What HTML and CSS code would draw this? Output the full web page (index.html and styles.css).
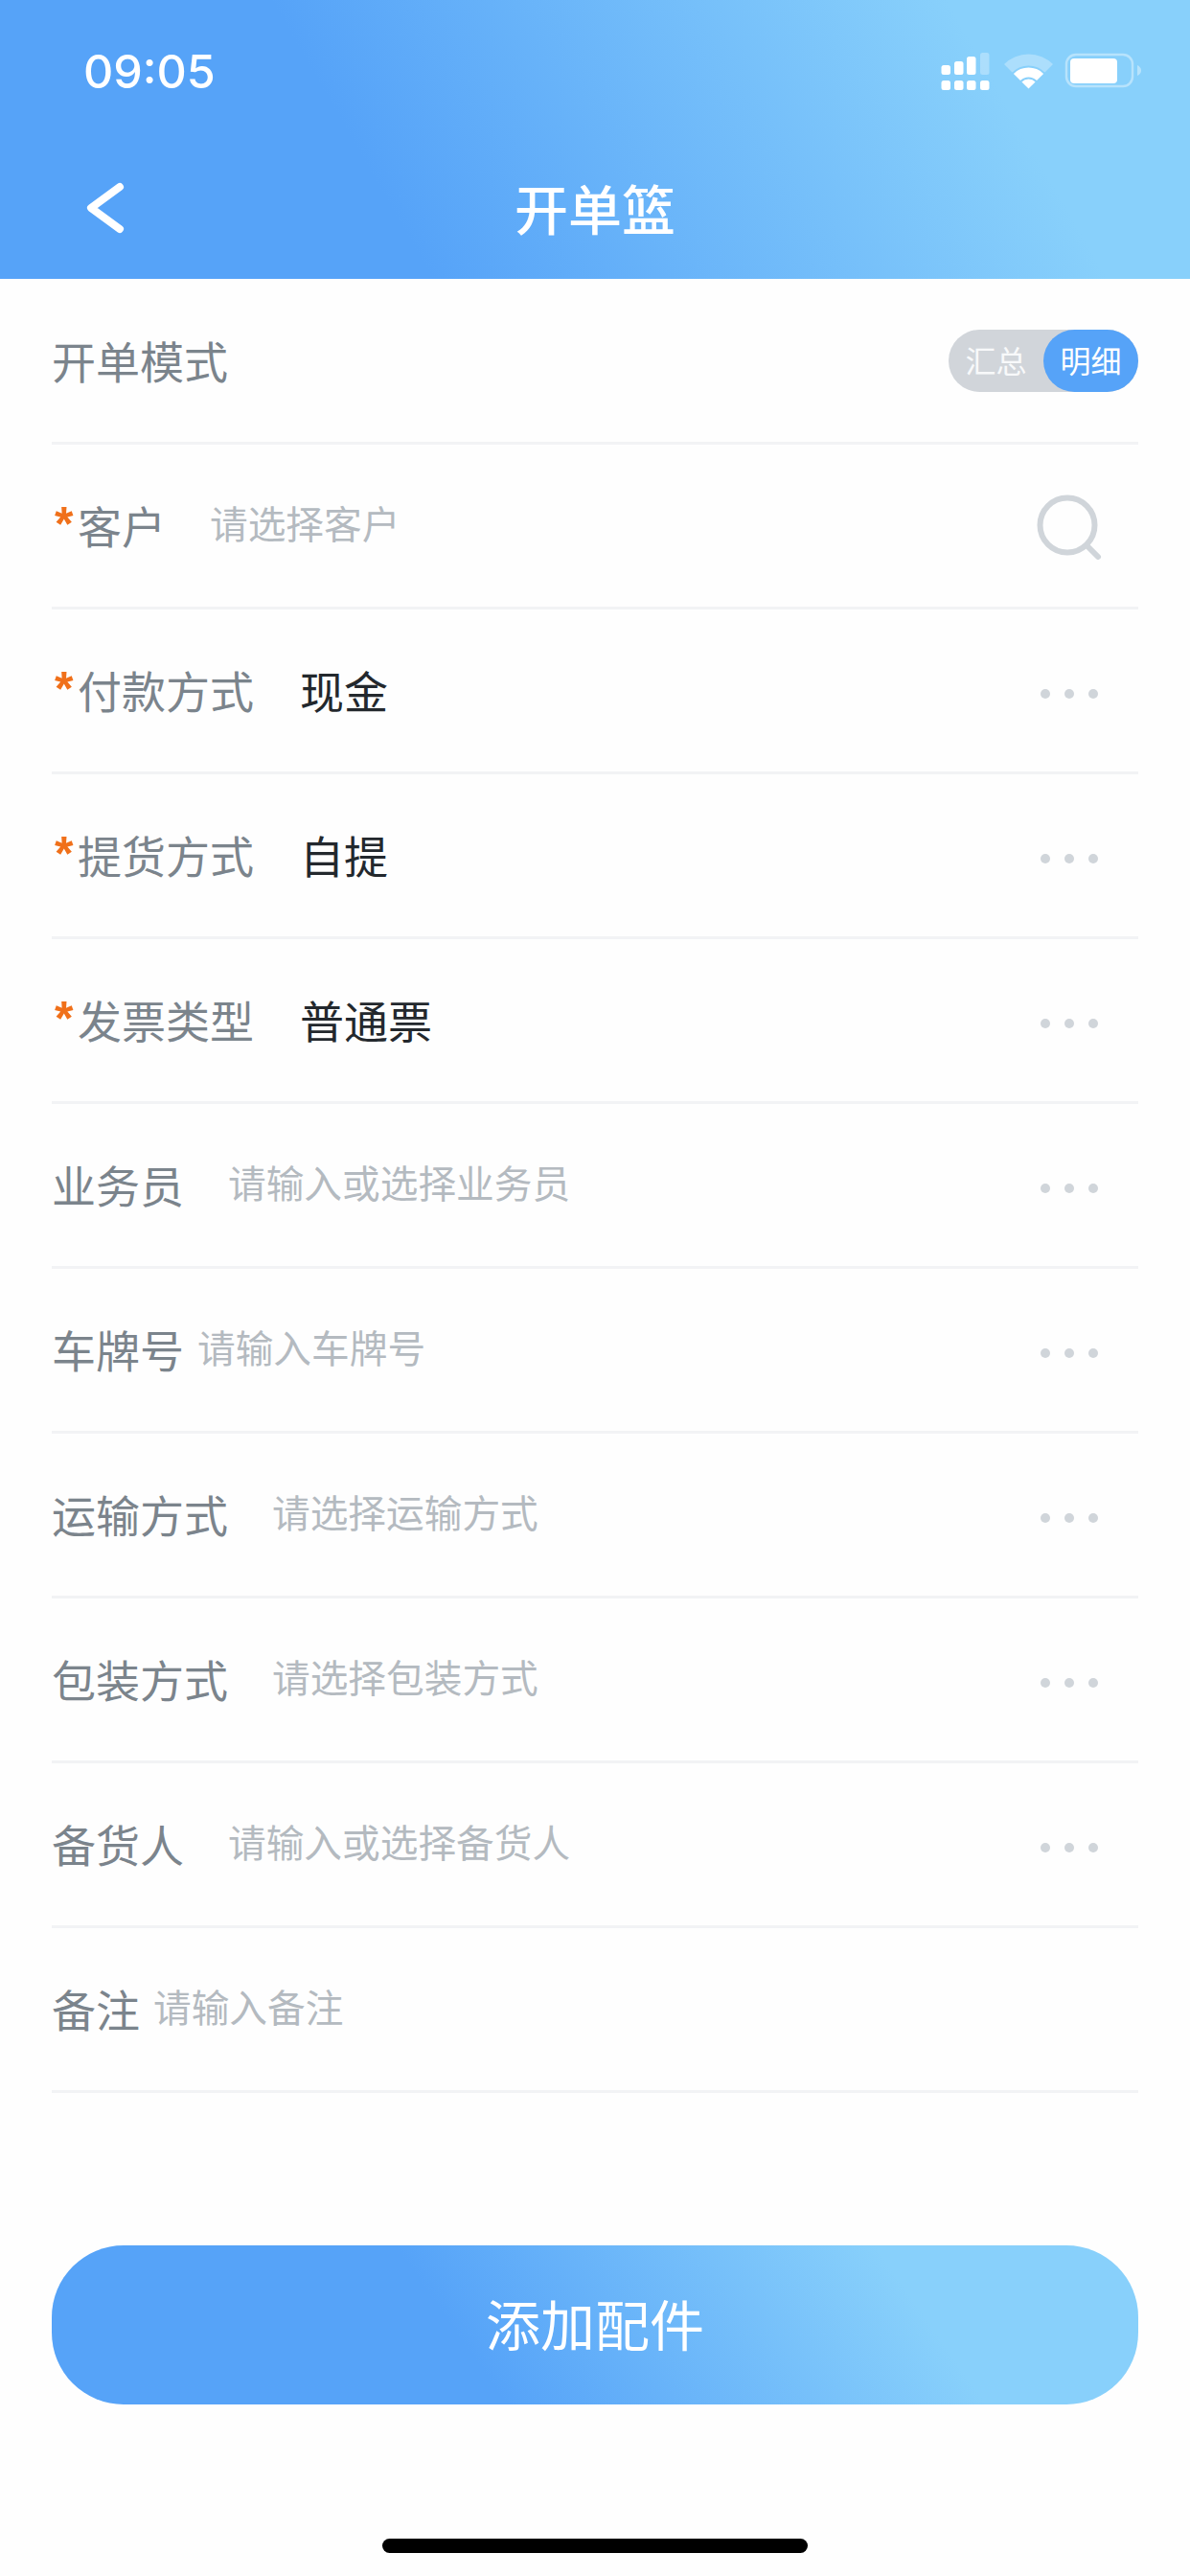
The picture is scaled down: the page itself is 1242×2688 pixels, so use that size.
FILE: index.html
```html
<!DOCTYPE html>
<html lang="zh-CN">
<head>
    <meta charset="UTF-8">
    <meta name="viewport" content="width=device-width, initial-scale=1.0">
    <title>开单篮</title>
    <link rel="stylesheet" href="styles.css">
</head>
<body>
    <header class="header">
        <div class="status-bar">
            <span class="time">09:05</span>
            <svg class="status-icons" width="210" height="40" viewBox="0 0 210 40">
                <g fill="#fff">
                    <rect x="0.5" y="13" width="9.5" height="10" rx="2.5"/>
                    <rect x="14" y="9" width="9.5" height="14" rx="2.5"/>
                    <rect x="27" y="4" width="9.5" height="19" rx="2.5"/>
                    <rect x="41" y="0" width="9.5" height="23" rx="2.5" opacity="0.3"/>
                    <rect x="0.5" y="29" width="9.5" height="10" rx="2.5"/>
                    <rect x="14" y="29" width="9.5" height="10" rx="2.5"/>
                    <rect x="27" y="29" width="9.5" height="10" rx="2.5"/>
                    <rect x="41" y="29" width="9.5" height="10" rx="2.5"/>
                </g>
                <path d="M66 12A36 36 0 0 1 117 12L108.5 20.5A24 24 0 0 0 74.5 20.5Z" fill="#fff" opacity="0.3"/>
                <path d="M75.9 21.9A22 22 0 0 1 107.1 21.9L100 29A12 12 0 0 0 83 29Z" fill="#fff"/>
                <path d="M91.5 37.5L84.4 30.4A10 10 0 0 1 98.6 30.4Z" fill="#fff"/>
                <rect x="131" y="2" width="69" height="33" rx="10" fill="none" stroke="#fff" stroke-width="2.5" opacity="0.4"/>
                <rect x="135" y="6" width="49" height="26" rx="4" fill="#fff"/>
                <path d="M205 13Q209 15 209 18.5Q209 22 205 24Z" fill="#fff" opacity="0.4"/>
            </svg>
        </div>
        <div class="nav-bar">
            <svg class="back" width="44" height="60" viewBox="0 0 44 60">
                <path d="M38 7L8 29l30 22" fill="none" stroke="#fff" stroke-width="8" stroke-linecap="round" stroke-linejoin="round"/>
            </svg>
            <h1 class="title">开单篮</h1>
        </div>
    </header>

    <main class="form">
        <div class="row">
            <span class="label">开单模式</span>
            <div class="toggle">
                <span class="toggle-item">汇总</span>
                <span class="toggle-item active">明细</span>
            </div>
        </div>
        <div class="row">
            <span class="star">*</span><span class="label">客户</span>
            <span class="hint">请选择客户</span>
            <svg class="search" width="70" height="70" viewBox="0 0 70 70">
                <circle cx="32" cy="32" r="28.5" fill="none" stroke="#d0d5da" stroke-width="6"/>
                <path d="M53 54l11 11" fill="none" stroke="#d0d5da" stroke-width="6" stroke-linecap="round"/>
            </svg>
        </div>
        <div class="row">
            <span class="star">*</span><span class="label">付款方式</span>
            <span class="value">现金</span>
            <div class="dots"><i></i><i></i><i></i></div>
        </div>
        <div class="row">
            <span class="star">*</span><span class="label">提货方式</span>
            <span class="value">自提</span>
            <div class="dots"><i></i><i></i><i></i></div>
        </div>
        <div class="row">
            <span class="star">*</span><span class="label">发票类型</span>
            <span class="value">普通票</span>
            <div class="dots"><i></i><i></i><i></i></div>
        </div>
        <div class="row">
            <span class="label">业务员</span>
            <span class="hint">请输入或选择业务员</span>
            <div class="dots"><i></i><i></i><i></i></div>
        </div>
        <div class="row">
            <span class="label">车牌号</span>
            <span class="hint tight">请输入车牌号</span>
            <div class="dots"><i></i><i></i><i></i></div>
        </div>
        <div class="row">
            <span class="label">运输方式</span>
            <span class="hint">请选择运输方式</span>
            <div class="dots"><i></i><i></i><i></i></div>
        </div>
        <div class="row">
            <span class="label">包装方式</span>
            <span class="hint">请选择包装方式</span>
            <div class="dots"><i></i><i></i><i></i></div>
        </div>
        <div class="row">
            <span class="label">备货人</span>
            <span class="hint">请输入或选择备货人</span>
            <div class="dots"><i></i><i></i><i></i></div>
        </div>
        <div class="row">
            <span class="label">备注</span>
            <span class="hint tight">请输入备注</span>
        </div>
    </main>

    <button class="add-btn">添加配件</button>
    <div class="home-bar"></div>
</body>
</html>
```

FILE: styles.css
```css
* {
    box-sizing: border-box;
}
body {
    margin: 0;
    width: 1242px;
    height: 2688px;
    overflow: hidden;
    background: #fefefe;
    font-family: "Noto Sans CJK SC", "Liberation Sans", sans-serif;
}
.header {
    height: 291px;
    padding: 0 50px 0 87px;
    background: linear-gradient(60deg, #56a3f8 32%, #88d0fb 82%);
    color: #fff;
}
.status-bar {
    display: flex;
    justify-content: space-between;
    padding-top: 55px;
    height: 150px;
}
.time {
    font-family: Inter, "Liberation Sans", sans-serif;
    font-size: 48.5px;
    font-weight: 500;
    line-height: 40px;
}
.status-icons {
    display: block;
}
.nav-bar {
    display: flex;
    align-items: center;
    height: 136px;
    position: relative;
}
.back {
    display: block;
}
.title {
    position: absolute;
    left: -87px;
    right: -50px;
    margin: 0;
    padding-bottom: 5px;
    text-align: center;
    font-size: 56px;
    font-weight: 500;
    line-height: 76px;
}
.form {
    padding: 1px 54px 0;
}
.row {
    display: flex;
    align-items: center;
    height: 172px;
    border-bottom: 3px solid #f2f3f5;
}
.star {
    width: 27px;
    padding: 0 0 3px 3px;
    color: #f0701a;
    font-family: "Liberation Sans", sans-serif;
    font-size: 50px;
    font-weight: 700;
    line-height: 60px;
}
.label {
    padding-bottom: 4px;
    color: #7b848c;
    font-size: 46px;
    line-height: 60px;
}
.value {
    margin-left: 48px;
    padding-bottom: 4px;
    color: #23282d;
    font-size: 46px;
    line-height: 60px;
}
.hint {
    margin-left: 46px;
    padding-bottom: 7px;
    color: #b4bac0;
    font-size: 39.7px;
    line-height: 56px;
}
.hint.tight {
    margin-left: 14px;
}
.toggle {
    display: flex;
    margin-left: auto;
    width: 198px;
    height: 65px;
    border-radius: 33px;
    background: #d1d5da;
}
.toggle-item {
    width: 99px;
    border-radius: 33px;
    color: #f8f9fa;
    font-size: 32px;
    line-height: 62px;
    text-align: center;
}
.toggle-item.active {
    background: #56a3f8;
    color: #fff;
}
.search {
    display: block;
    margin: 4px 36px 0 auto;
}
.dots {
    display: flex;
    gap: 15px;
    margin: 6px 42px 0 auto;
}
.dots i {
    display: block;
    width: 10px;
    height: 10px;
    border-radius: 50%;
    background: #d0d5da;
}
.add-btn {
    display: block;
    width: 1134px;
    height: 166px;
    margin: 159px 54px 0;
    padding: 0 0 6px;
    border: none;
    border-radius: 75px;
    background: linear-gradient(55deg, #56a3f8 38%, #88d0fb 78%);
    color: #fff;
    font-family: inherit;
    font-size: 57px;
}
.home-bar {
    width: 444px;
    height: 15px;
    margin: 140px auto 0;
    border-radius: 8px;
    background: #000;
}
```
